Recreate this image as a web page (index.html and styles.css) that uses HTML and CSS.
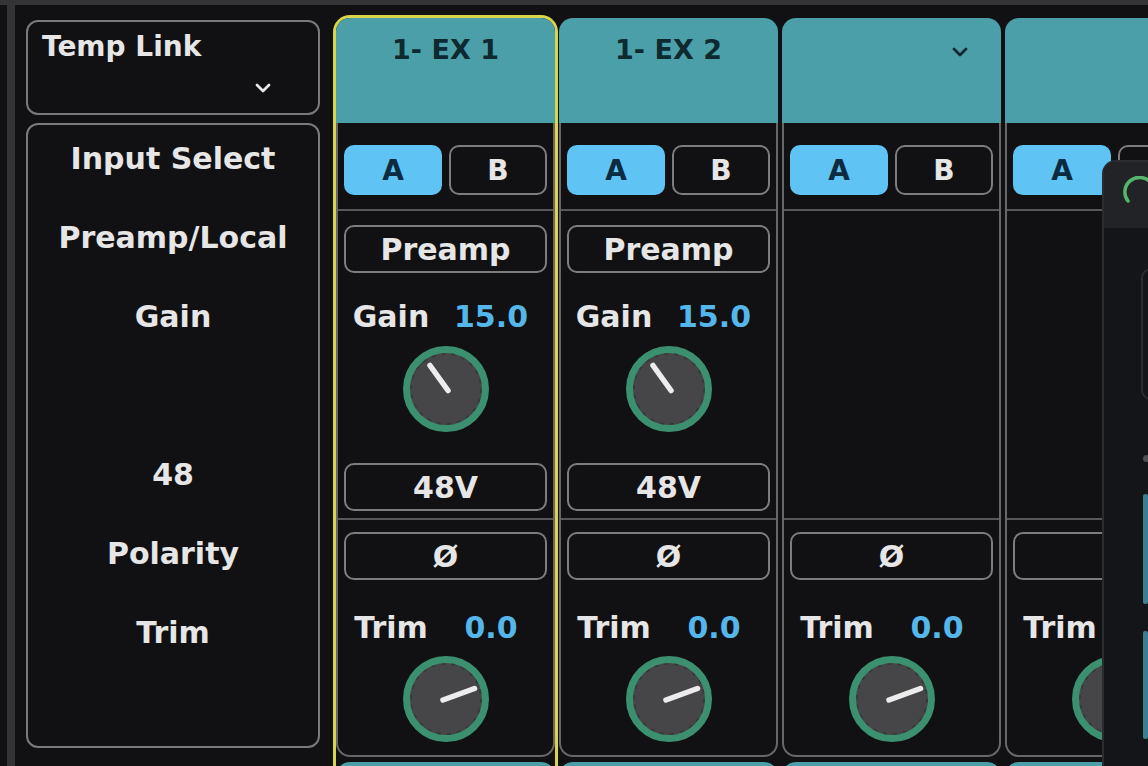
FILE: index.html
```html
<!DOCTYPE html>
<html>
<head>
<meta charset="utf-8">
<link rel="stylesheet" href="styles.css">
</head>
<body>
<div class="topband"></div>
<div class="screen">
  <div class="rail"></div>
  <main class="mixer">
    <section class="sidebar">
      <div class="templink">
        <div class="tl-text">Temp Link</div>
        <div class="chev-row">
          <svg class="chev" width="18" height="12" viewBox="0 0 18 12"><polyline points="3,3 9,9 15,3" fill="none" stroke="#e6e6e6" stroke-width="2.8" stroke-linecap="round" stroke-linejoin="round"/></svg>
        </div>
      </div>
      <div class="labels">
        <div class="lbl">Input Select</div>
        <div class="lbl">Preamp/Local</div>
        <div class="lbl">Gain</div>
        <div class="lbl"></div>
        <div class="lbl">48</div>
        <div class="lbl">Polarity</div>
        <div class="lbl">Trim</div>
      </div>
    </section>

    <section class="strips">
      <!-- strip 1 -->
      <div class="col sel">
        <div class="card">
          <div class="head"><div class="title">1- EX 1</div></div>
          <div class="body">
            <div class="sec1"><div class="ab"><div class="btn on">A</div><div class="btn">B</div></div></div>
            <div class="sec2">
              <div class="wide-btn">Preamp</div>
              <div class="readout"><span>Gain</span><span class="val">15.0</span></div>
              <svg class="knob" width="88" height="88" viewBox="-44 -44 88 88"><circle r="39.5" fill="#464548" stroke="#3b9070" stroke-width="7"/><circle r="35" fill="none" stroke="#38373a" stroke-width="1.6" stroke-dasharray="4 6"/><line x1="2" y1="1.5" x2="-16" y2="-23.5" stroke="#ececec" stroke-width="5.5" stroke-linecap="round"/></svg>
              <div class="wide-btn v48">48V</div>
            </div>
            <div class="sec3">
              <div class="wide-btn">Ø</div>
              <div class="readout trim"><span>Trim</span><span class="val">0.0</span></div>
              <svg class="knob" width="88" height="88" viewBox="-44 -44 88 88"><circle r="39.5" fill="#464548" stroke="#3b9070" stroke-width="7"/><circle r="35" fill="none" stroke="#38373a" stroke-width="1.6" stroke-dasharray="4 6"/><line x1="-3" y1="1" x2="28.5" y2="-10.5" stroke="#ececec" stroke-width="5.5" stroke-linecap="round"/></svg>
            </div>
          </div>
        </div>
        <div class="card peek"><div class="head"></div></div>
      </div>

      <!-- strip 2 -->
      <div class="col">
        <div class="card">
          <div class="head"><div class="title">1- EX 2</div></div>
          <div class="body">
            <div class="sec1"><div class="ab"><div class="btn on">A</div><div class="btn">B</div></div></div>
            <div class="sec2">
              <div class="wide-btn">Preamp</div>
              <div class="readout"><span>Gain</span><span class="val">15.0</span></div>
              <svg class="knob" width="88" height="88" viewBox="-44 -44 88 88"><circle r="39.5" fill="#464548" stroke="#3b9070" stroke-width="7"/><circle r="35" fill="none" stroke="#38373a" stroke-width="1.6" stroke-dasharray="4 6"/><line x1="2" y1="1.5" x2="-16" y2="-23.5" stroke="#ececec" stroke-width="5.5" stroke-linecap="round"/></svg>
              <div class="wide-btn v48">48V</div>
            </div>
            <div class="sec3">
              <div class="wide-btn">Ø</div>
              <div class="readout trim"><span>Trim</span><span class="val">0.0</span></div>
              <svg class="knob" width="88" height="88" viewBox="-44 -44 88 88"><circle r="39.5" fill="#464548" stroke="#3b9070" stroke-width="7"/><circle r="35" fill="none" stroke="#38373a" stroke-width="1.6" stroke-dasharray="4 6"/><line x1="-3" y1="1" x2="28.5" y2="-10.5" stroke="#ececec" stroke-width="5.5" stroke-linecap="round"/></svg>
            </div>
          </div>
        </div>
        <div class="card peek"><div class="head"></div></div>
      </div>

      <!-- strip 3 -->
      <div class="col">
        <div class="card">
          <div class="head"><div class="title chev-title"><svg width="18" height="12" viewBox="0 0 18 12"><polyline points="3,3 9,9 15,3" fill="none" stroke="#0e2a31" stroke-width="2.8" stroke-linecap="round" stroke-linejoin="round"/></svg></div></div>
          <div class="body">
            <div class="sec1"><div class="ab"><div class="btn on">A</div><div class="btn">B</div></div></div>
            <div class="sec2"></div>
            <div class="sec3">
              <div class="wide-btn">Ø</div>
              <div class="readout trim"><span>Trim</span><span class="val">0.0</span></div>
              <svg class="knob" width="88" height="88" viewBox="-44 -44 88 88"><circle r="39.5" fill="#464548" stroke="#3b9070" stroke-width="7"/><circle r="35" fill="none" stroke="#38373a" stroke-width="1.6" stroke-dasharray="4 6"/><line x1="-3" y1="1" x2="28.5" y2="-10.5" stroke="#ececec" stroke-width="5.5" stroke-linecap="round"/></svg>
            </div>
          </div>
        </div>
        <div class="card peek"><div class="head"></div></div>
      </div>

      <!-- strip 4 (partly under the overlay panel) -->
      <div class="col">
        <div class="card">
          <div class="head"><div class="title"></div></div>
          <div class="body">
            <div class="sec1"><div class="ab"><div class="btn on">A</div><div class="btn">B</div></div></div>
            <div class="sec2"></div>
            <div class="sec3">
              <div class="wide-btn">Ø</div>
              <div class="readout trim"><span>Trim</span><span class="val">0.0</span></div>
              <svg class="knob" width="88" height="88" viewBox="-44 -44 88 88"><circle r="39.5" fill="#464548" stroke="#3b9070" stroke-width="7"/><circle r="35" fill="none" stroke="#38373a" stroke-width="1.6" stroke-dasharray="4 6"/><line x1="-3" y1="1" x2="28.5" y2="-10.5" stroke="#ececec" stroke-width="5.5" stroke-linecap="round"/></svg>
            </div>
          </div>
        </div>
        <div class="card peek"><div class="head"></div></div>
      </div>
    </section>
  </main>

  <aside class="overlay">
    <div class="ov-top">
      <svg class="gauge" width="30" height="30" viewBox="0 0 30 30"><path d="M5 25 A 14 14 0 0 1 28 7" fill="none" stroke="#55b56a" stroke-width="3.5" stroke-linecap="round"/></svg>
    </div>
    <div class="ov-body">
      <div class="ov-frame"></div>
      <div class="ov-dot"></div>
      <div class="ov-bar"></div>
      <div class="ov-bar b2"></div>
    </div>
  </aside>
</div>
</body>
</html>
```

FILE: styles.css
```css
* { box-sizing: border-box; }
html, body { margin: 0; }
body {
  width: 1148px;
  height: 766px;
  overflow: hidden;
  position: relative;
  background: #111113;
  font-family: "DejaVu Sans", "Noto Sans", sans-serif;
  font-weight: 700;
  color: #e6e6e6;
}
.topband { height: 5px; background: #343436; }
.screen { display: flex; height: 761px; overflow: hidden; }
.rail { flex: none; width: 8px; margin-left: 7px; background: #343436; }

.mixer {
  display: flex;
  align-items: flex-start;
  gap: 16px;
  padding: 13px 0 0 11px;
}

/* sidebar */
.sidebar {
  flex: none;
  width: 294px;
  margin-top: 2px;
  display: flex;
  flex-direction: column;
  gap: 8px;
}
.templink {
  height: 95px;
  border: 2px solid #7a7a7a;
  border-radius: 12px;
  padding: 10px 0 0 14px;
  font-size: 28px;
  line-height: 30px;
}
.chev-row {
  display: flex;
  justify-content: flex-end;
  padding-right: 46px;
  margin-top: 20px;
}
.chev { display: block; }
.labels {
  height: 625px;
  border: 2px solid #7a7a7a;
  border-radius: 12px;
  padding-top: 16px;
  display: flex;
  flex-direction: column;
  align-items: center;
  gap: 43px;
  font-size: 30px;
  line-height: 36px;
}
.lbl { height: 36px; white-space: nowrap; }

/* strips */
.strips { display: flex; gap: 4px; }
.col {
  flex: none;
  width: 219px;
  display: flex;
  flex-direction: column;
  gap: 5px;
  border-radius: 14px 14px 0 0;
}
.col.sel { box-shadow: 0 0 0 3px #d8d44c; }
.card { height: 739px; display: flex; flex-direction: column; }
.card.peek { height: 60px; }
.head {
  flex: none;
  height: 105px;
  background: #4b9fa8;
  border-radius: 14px 14px 0 0;
  padding-top: 14px;
  color: #0e2a31;
  font-size: 27px;
  line-height: 36px;
  text-align: center;
}
.title { height: 36px; white-space: nowrap; }
.chev-title {
  display: flex;
  justify-content: flex-end;
  align-items: center;
  padding: 4px 32px 0 0;
}
.body {
  flex: 1;
  display: flex;
  flex-direction: column;
  border: 2px solid #676767;
  border-top: none;
  border-radius: 0 0 14px 14px;
}
.sec1 {
  flex: none;
  height: 88px;
  padding: 22px 6px 0;
  border-bottom: 2px solid #585858;
}
.ab { display: flex; gap: 7px; }
.btn {
  flex: 1;
  height: 50px;
  border: 2px solid #7d7d7d;
  border-radius: 10px;
  display: flex;
  align-items: center;
  justify-content: center;
  font-size: 28px;
}
.btn.on { background: #5fc3f3; border-color: #5fc3f3; color: #0c2a40; }
.sec2 {
  flex: none;
  height: 309px;
  padding: 14px 6px 0;
  border-bottom: 2px solid #585858;
  display: flex;
  flex-direction: column;
}
.sec3 {
  flex: 1;
  padding: 12px 6px 0;
  display: flex;
  flex-direction: column;
}
.wide-btn {
  flex: none;
  height: 48px;
  border: 2px solid #7d7d7d;
  border-radius: 10px;
  display: flex;
  align-items: center;
  justify-content: center;
  font-size: 30px;
}
.readout {
  margin: 27px 0 0 -3px;
  height: 34px;
  line-height: 34px;
  display: grid;
  grid-template-columns: 100px 100px;
  text-align: center;
  font-size: 30px;
  white-space: nowrap;
}
.readout.trim { margin-top: 31px; }
.val { color: #55b6ea; }
.knob { flex: none; display: block; align-self: center; margin-top: 11px; }
.sec3 .knob { margin-top: 10px; }
.v48 { margin-top: 30px; }

/* overlay panel at right */
.overlay {
  position: absolute;
  left: 1102px;
  top: 160px;
  right: 0;
  bottom: 0;
  background: #141518;
  border-left: 2px solid #2b2c30;
  border-top: 2px solid #2b2c30;
  border-top-left-radius: 14px;
  overflow: hidden;
  display: flex;
  flex-direction: column;
}
.ov-top { flex: none; height: 66px; background: #222327; padding: 14px 0 0 19px; }
.gauge { display: block; }
.ov-body { display: flex; flex-direction: column; padding-left: 37px; }
.ov-frame {
  margin-top: 40px;
  width: 40px;
  height: 132px;
  border: 2px solid #2a2c30;
  border-radius: 10px;
}
.ov-dot {
  margin: 55px 0 0 2px;
  width: 7px;
  height: 7px;
  border-radius: 50%;
  background: #4e4f53;
}
.ov-bar { margin: 32px 0 0 2px; width: 5px; height: 110px; background: #3d7d94; border-radius: 2px; }
.ov-bar.b2 { margin-top: 27px; height: 108px; }
```
